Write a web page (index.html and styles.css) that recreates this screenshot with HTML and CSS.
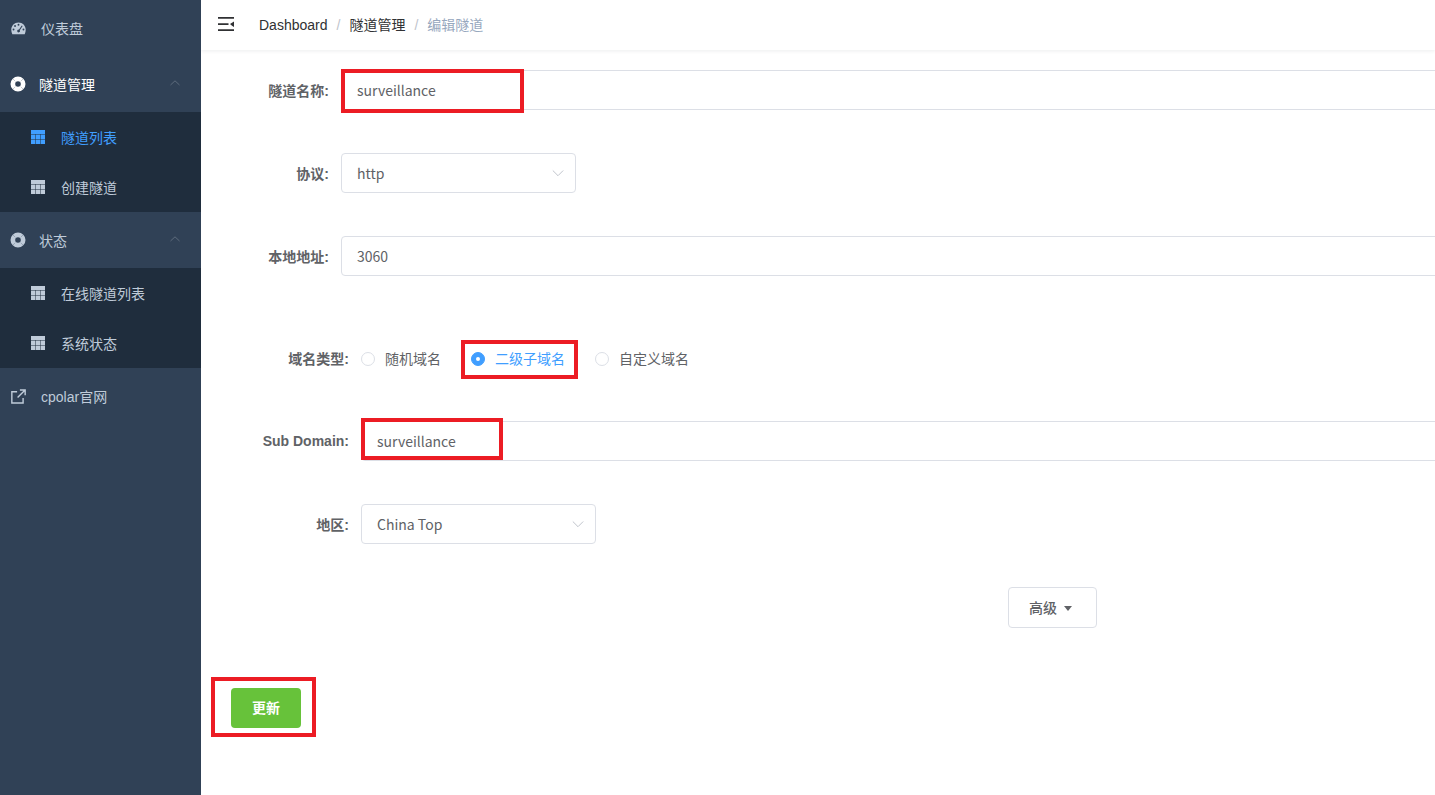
FILE: index.html
```html
<!DOCTYPE html>
<html lang="zh-CN">
<head>
<meta charset="utf-8">
<title>编辑隧道</title>
<link rel="stylesheet" href="styles.css">
</head>
<body>
<div class="app">
  <aside class="sidebar">
    <a class="nav-item plain">
      <svg class="nav-icon" viewBox="0 0 16 16"><path fill="currentColor" fill-rule="evenodd" d="M8 1.500C3.600 1.500.3 4.900.3 9.300c0 1.700.4 3.200 1.100 4.700h13.200c.7-1.500 1.100-3 1.100-4.700C15.700 4.900 12.400 1.500 8 1.500zM8 3a1 1 0 1 1 0 2 1 1 0 0 1 0-2zM4.300 4.300a1 1 0 1 1 0 2 1 1 0 0 1 0-2zM2.700 8a1 1 0 1 1 0 2 1 1 0 0 1 0-2zM13.300 8a1 1 0 1 1 0 2 1 1 0 0 1 0-2zM11.500 4.800l.9.6-3 4.500a1.500 1.500 0 1 1-1-.7z"/></svg>
      <span>仪表盘</span>
    </a>
    <div class="nav-group">
      <a class="nav-item head open">
        <svg class="nav-icon" viewBox="0 0 16 16"><path fill="currentColor" fill-rule="evenodd" d="M8 .5a7.500 7.500 0 1 1 0 15 7.500 7.500 0 0 1 0-15zM8 5.200a2.800 2.800 0 1 0 0 5.600 2.800 2.800 0 0 0 0-5.600z"/><path class="ring-cut" d="M2.700 2.700 5.400 5.400M13.300 2.700 10.600 5.400M2.700 13.300 5.400 10.600M13.300 13.300 10.600 10.600"/></svg>
        <span>隧道管理</span>
        <svg class="chev" viewBox="0 0 12 12"><path d="M1.500 8 6 3.800 10.500 8"/></svg>
      </a>
      <div class="submenu">
        <a class="sub-item active"><svg class="tbl" viewBox="0 0 14 14"><rect width="14" height="14" fill="currentColor"/><path class="tbl-lines" d="M0 4.500h14M0 9.500h14M4.500 4v10M9.500 4v10"/></svg><span>隧道列表</span></a>
        <a class="sub-item"><svg class="tbl" viewBox="0 0 14 14"><rect width="14" height="14" fill="currentColor"/><path class="tbl-lines" d="M0 4.500h14M0 9.500h14M4.500 4v10M9.500 4v10"/></svg><span>创建隧道</span></a>
      </div>
    </div>
    <div class="nav-group">
      <a class="nav-item head">
        <svg class="nav-icon" viewBox="0 0 16 16"><path fill="currentColor" fill-rule="evenodd" d="M8 .5a7.500 7.500 0 1 1 0 15 7.500 7.500 0 0 1 0-15zM8 5.200a2.800 2.800 0 1 0 0 5.600 2.800 2.800 0 0 0 0-5.600z"/><path class="ring-cut" d="M2.700 2.700 5.400 5.400M13.300 2.700 10.600 5.400M2.700 13.300 5.400 10.600M13.300 13.300 10.600 10.600"/></svg>
        <span>状态</span>
        <svg class="chev" viewBox="0 0 12 12"><path d="M1.500 8 6 3.800 10.500 8"/></svg>
      </a>
      <div class="submenu">
        <a class="sub-item"><svg class="tbl" viewBox="0 0 14 14"><rect width="14" height="14" fill="currentColor"/><path class="tbl-lines" d="M0 4.500h14M0 9.500h14M4.500 4v10M9.500 4v10"/></svg><span>在线隧道列表</span></a>
        <a class="sub-item"><svg class="tbl" viewBox="0 0 14 14"><rect width="14" height="14" fill="currentColor"/><path class="tbl-lines" d="M0 4.500h14M0 9.500h14M4.500 4v10M9.500 4v10"/></svg><span>系统状态</span></a>
      </div>
    </div>
    <a class="nav-item plain">
      <svg class="nav-icon" viewBox="0 0 16 16"><path class="link-stroke" d="M6.500 3H.9v12h12V9.500M9.500 1h5.600v5.600M14.800 1.300 7 9"/></svg>
      <span>cpolar官网</span>
    </a>
  </aside>

  <main class="main">
    <header class="navbar">
      <svg class="hamburger" viewBox="0 0 16 14"><path fill="#303133" d="M0 0h16v1.700H0zM0 6.300h10.500V8H0zM0 12.300h16V14H0zM16 4.600v5.400l-2-1.200-2-1.700 2-1.300z"/></svg>
      <nav class="crumbs">
        <span class="crumb-link">Dashboard</span>
        <span class="crumb-sep">/</span>
        <span class="crumb-cn">隧道管理</span>
        <span class="crumb-sep">/</span>
        <span class="crumb-cur">编辑隧道</span>
      </nav>
    </header>

    <form class="form">
      <div class="row short">
        <label class="label">隧道名称:</label>
        <input class="field" value="surveillance">
      </div>
      <div class="row short">
        <label class="label">协议:</label>
        <div class="select"><span>http</span><svg class="select-chev" viewBox="0 0 12 12"><path d="M.8 3.500 6 8.700l5.200-5.200"/></svg></div>
      </div>
      <div class="row short">
        <label class="label">本地地址:</label>
        <input class="field" value="3060">
      </div>
      <div class="row wide radios-row">
        <label class="label">域名类型:</label>
        <div class="radios">
          <span class="radio"><i class="dot"></i>随机域名</span>
          <span class="radio checked"><i class="dot"></i>二级子域名</span>
          <span class="radio"><i class="dot"></i>自定义域名</span>
        </div>
      </div>
      <div class="row wide">
        <label class="label">Sub Domain:</label>
        <input class="field" value="surveillance">
      </div>
      <div class="row wide">
        <label class="label">地区:</label>
        <div class="select"><span>China Top</span><svg class="select-chev" viewBox="0 0 12 12"><path d="M.8 3.500 6 8.700l5.200-5.200"/></svg></div>
      </div>
      <div class="advanced-row">
        <button type="button" class="btn-adv">高级<i class="caret"></i></button>
      </div>
      <div class="submit-row">
        <button type="button" class="btn-submit">更新</button>
      </div>
    </form>

    <div class="mark mark-name"></div>
    <div class="mark mark-radio"></div>
    <div class="mark mark-sub"></div>
    <div class="mark mark-submit"></div>
  </main>
</div>
</body>
</html>
```
FILE: styles.css
```css
* { box-sizing: border-box; }
html, body { margin: 0; height: 100%; overflow: hidden; }
body {
  font-family: "Noto Sans CJK SC", "Noto Sans", sans-serif;
  font-size: 14px;
  color: #606266;
  background: #fff;
}
.app { display: flex; height: 795px; width: 1435px; }

.sidebar {
  width: 201px; flex: none; background: #304156; color: #bfcbd9;
  font-family: "Liberation Sans", "Noto Sans CJK SC", sans-serif;
}
.nav-item { display: flex; align-items: center; height: 56px; padding-left: 11px; position: relative; }
.nav-icon { width: 15px; height: 15px; flex: none; }
.plain span { margin-left: 15px; }
.head span { margin-left: 13px; }
.head .nav-icon { width: 16px; height: 16px; margin-left: -1px; }
.head.open { color: #fff; }
.ring-cut { fill: none; stroke: #304156; stroke-width: .8; opacity: .35; }
.link-stroke { fill: none; stroke: currentColor; stroke-width: 1.5; }
.chev { width: 12px; height: 12px; position: absolute; left: 169px; top: 21px; fill: none; stroke: #5d6b7c; stroke-width: 1; }
.submenu { background: #1f2d3d; }
.sub-item { display: flex; align-items: center; height: 50px; padding-left: 31px; }
.sub-item.active { color: #409eff; }
.tbl { width: 14px; height: 14px; flex: none; margin-right: 16px; }
.tbl-lines { fill: none; stroke: #1f2d3d; stroke-width: 1; opacity: .5; }

.main { flex: 1; min-width: 0; position: relative; overflow: hidden; }
.navbar { height: 50px; display: flex; align-items: center; box-shadow: 0 1px 4px rgba(0, 21, 41, .08); padding-left: 17px; }
.hamburger { width: 16px; height: 14px; margin-top: -2px; flex: none; }
.crumbs {
  display: flex; align-items: center; margin-left: 25px;
  font-family: "Liberation Sans", "Noto Sans CJK SC", sans-serif;
}
.crumb-link { color: #303133; }
.crumb-cn { color: #303133; margin-bottom: 2px; }
.crumb-cur { color: #97a8be; margin-bottom: 2px; }
.crumb-sep { color: #c0c4cc; margin: 0 9px; }

.form { padding-top: 20px; }
.row { display: flex; align-items: center; height: 40px; margin-bottom: 43px; }
.label {
  flex: none; text-align: right; font-weight: 700; margin-right: 12px; white-space: nowrap;
  font-family: "Liberation Sans", "Noto Sans CJK SC", sans-serif;
}
.short .label { width: 128px; }
.wide .label { width: 148px; }
.field {
  flex: 1; min-width: 0; height: 40px; margin-right: -10px;
  padding: 0 15px; border: 1px solid #dcdfe6; border-radius: 4px;
  font: inherit; color: #606266; background: #fff; outline: none;
}
.select {
  width: 235px; height: 40px; display: flex; align-items: center; justify-content: space-between;
  padding: 0 11px 0 15px; border: 1px solid #dcdfe6; border-radius: 4px; background: #fff;
}
.select-chev { width: 12px; height: 12px; fill: none; stroke: #c0c4cc; stroke-width: 1; }
.radios-row { margin-top: 63px; margin-bottom: 42px; padding-bottom: 2px; }
.short:nth-child(3) { margin-bottom: 0; }
.radios { display: flex; align-items: center; }
.radio { display: flex; align-items: center; margin-right: 30px; }
.dot {
  width: 14px; height: 14px; border-radius: 50%; border: 1px solid #dcdfe6; background: #fff;
  margin-right: 10px; margin-top: 2px; flex: none; position: relative;
}
.radio.checked { color: #409eff; }
.checked .dot { background: #409eff; border-color: #409eff; }
.checked .dot::after {
  content: ""; position: absolute; left: 4px; top: 4px; width: 4px; height: 4px;
  border-radius: 50%; background: #fff;
}
.advanced-row { display: flex; padding-left: 807px; }
.btn-adv {
  width: 89px; height: 41px; display: flex; align-items: center; justify-content: center;
  border: 1px solid #dcdfe6; border-radius: 4px; background: #fff; color: #606266;
  font: inherit; font-weight: 500; padding: 0 0 2px 0;
}
.caret {
  width: 0; height: 0; margin-left: 7px; margin-top: 3px; margin-right: 4px;
  border-left: 4.5px solid transparent; border-right: 4.5px solid transparent; border-top: 5px solid #606266;
}
.submit-row { padding-left: 30px; margin-top: 60px; }
.btn-submit {
  width: 70px; height: 40px; border: 0; border-radius: 4px; background: #67c23a; color: #fff;
  font: inherit; font-weight: 700; padding: 0 0 2px 0;
}

.mark { position: absolute; border: 4px solid #ec1c24; pointer-events: none; }
.mark-name { left: 140px; top: 69px; width: 183px; height: 44px; }
.mark-radio { left: 260px; top: 340px; width: 117px; height: 39px; }
.mark-sub { left: 160px; top: 418px; width: 142px; height: 42px; }
.mark-submit { left: 10px; top: 677px; width: 105px; height: 60px; }
```
